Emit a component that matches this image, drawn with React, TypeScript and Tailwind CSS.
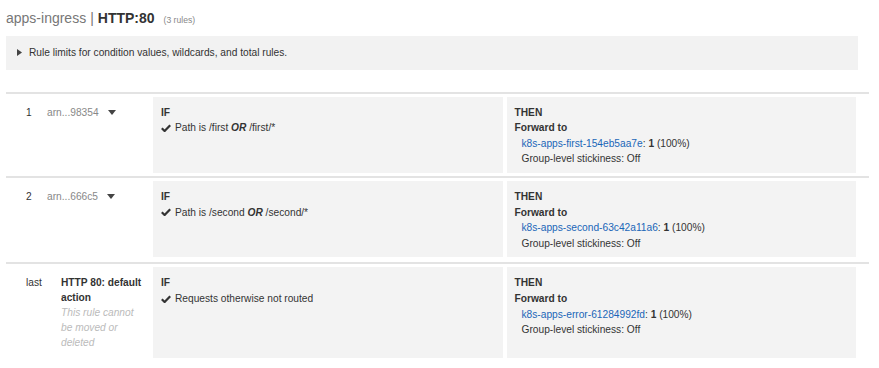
import { ReactNode } from 'react';

const Check = () => (
  <svg width="10" height="8" viewBox="0 0 10 8" className="mr-[4px] inline-block shrink-0">
    <path d="M0.8 4.2 L3.6 7 L9.2 1.2" fill="none" stroke="#333" strokeWidth="2.2" />
  </svg>
);

const Caret = () => (
  <svg width="8" height="5" viewBox="0 0 8 5" className="ml-[9px] inline-block">
    <path d="M0 0 H8 L4 5 Z" fill="#444" />
  </svg>
);

type Rule = {
  num: string;
  name: ReactNode;
  wide?: boolean;
  condition: ReactNode;
  target: string;
};

const rules: Rule[] = [
  {
    num: '1',
    name: (
      <span className="flex items-center text-[#888]">
        arn...98354
        <Caret />
      </span>
    ),
    condition: (
      <>
        Path is /first <b className="italic">OR</b> /first/*
      </>
    ),
    target: 'k8s-apps-first-154eb5aa7e',
  },
  {
    num: '2',
    name: (
      <span className="flex items-center text-[#888]">
        arn...666c5
        <Caret />
      </span>
    ),
    condition: (
      <>
        Path is /second <b className="italic">OR</b> /second/*
      </>
    ),
    target: 'k8s-apps-second-63c42a11a6',
  },
  {
    num: 'last',
    wide: true,
    name: (
      <div className="w-[82px] leading-[15px]">
        <div className="font-bold text-[#333]">HTTP 80: default action</div>
        <div className="italic text-[#bbb]">This rule cannot be moved or deleted</div>
      </div>
    ),
    condition: <>Requests otherwise not routed</>,
    target: 'k8s-apps-error-61284992fd',
  },
];

export default function App() {
  return (
    <div className="min-h-[368px] w-[879px] bg-white px-[6px] pt-[8px] font-['Liberation_Sans',Arial,sans-serif] text-[10.2px] leading-[15.6px] text-[#333]">
      <h1 className="flex items-baseline text-[14px] leading-[20px]">
        <span className="text-[#777]">apps-ingress</span>
        <span className="mx-[4px] text-[#777]">|</span>
        <span className="font-bold text-[#333]">HTTP:80</span>
        <span className="ml-[9px] text-[8.6px] text-[#888]">(3 rules)</span>
      </h1>

      <div className="mt-[6px] flex w-[852px] items-center bg-[#f2f2f2] px-[11px] py-[9px]">
        <svg width="5" height="7" viewBox="0 0 5 7" className="mr-[7px]">
          <path d="M0 0 L5 3.5 L0 7 Z" fill="#444" />
        </svg>
        <span>Rule limits for condition values, wildcards, and total rules.</span>
      </div>

      <div className="mt-[22px] w-[863px]">
        {rules.map((rule) => (
          <div
            key={rule.num}
            className={
              'flex gap-[4px] border-t-2 border-[#e3e3e3] pr-[13px] pt-[3px] pb-[3px]' +
              (rule.wide ? ' mt-[2px]' : '')
            }
          >
            <div className="flex w-[143px] shrink-0 items-start pt-[8px] pb-[8px] pl-[20px]">
              <div className={rule.wide ? 'w-[35px] leading-[15px]' : 'w-[21px]'}>{rule.num}</div>
              {rule.name}
            </div>
            <div className="flex-1 bg-[#f3f3f3] px-[8px] pt-[8px] pb-[6px]">
              <div className="font-bold">IF</div>
              <div className="flex items-center">
                <Check />
                <span>{rule.condition}</span>
              </div>
            </div>
            <div className="flex-1 bg-[#f3f3f3] px-[8px] pt-[8px] pb-[6px]">
              <div className="font-bold">THEN</div>
              <div className="font-bold">Forward to</div>
              <div className="pl-[7px]">
                <a href="#" className="text-[#1a66b8]">
                  {rule.target}
                </a>
                : <b>1</b> (100%)
              </div>
              <div className="pl-[7px]">Group-level stickiness: Off</div>
            </div>
          </div>
        ))}
      </div>
    </div>
  );
}
